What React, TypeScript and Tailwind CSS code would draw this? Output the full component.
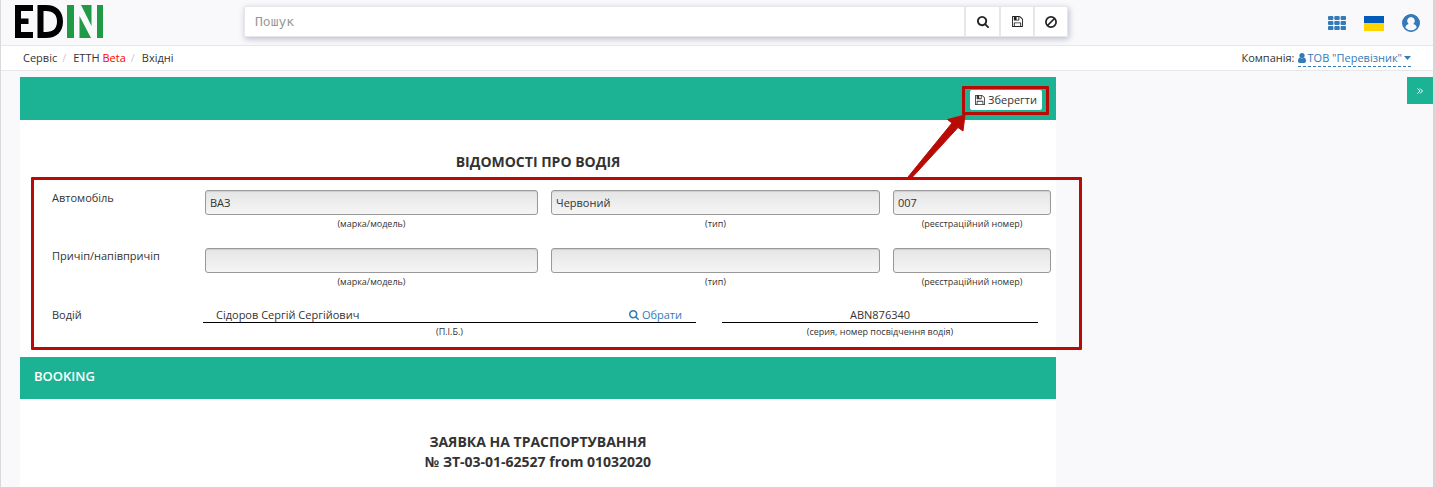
import type { ReactNode } from "react";

type IconProps = { className?: string };

const SaveIcon = ({ className }: IconProps) => (
  <svg className={className} viewBox="0 128 1536 1536" fill="currentColor" aria-hidden="true">
    <path d="M384 1536h768v-384h-768v384zM1280 1536h128v-896q0-14-10-38.5t-20-34.5l-281-281q-10-10-34-20t-39-10v416q0 40-28 68t-68 28h-576q-40 0-68-28t-28-68v-416h-128v1280h128v-416q0-40 28-68t68-28h832q40 0 68 28t28 68v416zM896 608v-320q0-13-9.5-22.5t-22.5-9.5h-192q-13 0-22.5 9.5t-9.5 22.5v320q0 13 9.5 22.5t22.5 9.5h192q13 0 22.5-9.5t9.5-22.5zM1536 640v928q0 40-28 68t-68 28h-1344q-40 0-68-28t-28-68v-1344q0-40 28-68t68-28h928q40 0 88 20t76 48l280 280q28 28 48 76t20 88z" />
  </svg>
);

const SearchIcon = ({ className }: IconProps) => (
  <svg className={className} viewBox="0 128 1664 1664" fill="currentColor" aria-hidden="true">
    <path d="M1152 832q0-185-131.5-316.5t-316.5-131.5-316.5 131.5-131.5 316.5 131.5 316.5 316.5 131.5 316.5-131.5 131.5-316.5zm512 832q0 52-38 90t-90 38q-54 0-90-38l-343-342q-179 124-399 124-143 0-273.5-55.5t-225-150-150-225-55.5-273.5 55.5-273.5 150-225 225-150 273.5-55.5 273.5 55.5 225 150 150 225 55.5 273.5q0 220-124 399l343 343q37 37 37 90z" />
  </svg>
);

const BanIcon = ({ className }: IconProps) => (
  <svg className={className} viewBox="0 0 12 12" fill="none" stroke="currentColor" strokeWidth="1.7" aria-hidden="true">
    <circle cx="6" cy="6" r="5.1" />
    <path d="M2.5 9.5l7-7" />
  </svg>
);

const UserIcon = ({ className }: IconProps) => (
  <svg className={className} viewBox="0 0 8 10" fill="currentColor" aria-hidden="true">
    <circle cx="4" cy="2.6" r="2.6" />
    <path d="M2 4.600C.6 4.800 0 6.400 0 8.100 0 9.200.7 10 1.700 10h4.600C7.300 10 8 9.200 8 8.100 8 6.400 7.400 4.800 6 4.600 4.800 5.800 3.200 5.800 2 4.600z" />
  </svg>
);

const GridIcon = ({ className }: IconProps) => (
  <svg className={className} viewBox="0 0 18 14" fill="currentColor" aria-hidden="true">
    {[0, 5, 10].map((y) =>
      [0, 6.3, 12.6].map((x) => <rect key={`${x}-${y}`} x={x} y={y} width="5.4" height="4.1" rx="1" />),
    )}
  </svg>
);

const AccountIcon = ({ className }: IconProps) => (
  <svg className={className} viewBox="0 0 18 18" aria-hidden="true">
    <circle cx="9" cy="9" r="8.3" fill="none" stroke="currentColor" strokeWidth="1.3" />
    <path
      fill="currentColor"
      fillRule="evenodd"
      d="M9 .5a8.500 8.500 0 1 0 0 17 8.500 8.500 0 0 0 0-17zM9 3a3.700 3.900 0 0 1 2.300 7c2 .3 3 1.600 3.400 3.700a7.400 7.400 0 0 1-11.400 0C3.700 11.600 4.700 10.300 6.700 10A3.700 3.900 0 0 1 9 3z"
    />
  </svg>
);

const Logo = () => (
  <svg className="h-[34px] w-[89px]" viewBox="0 0 89 34" role="img" aria-label="EDIN">
    <path d="M0 0h18v6H6v7.500h7.500v5.500H6V27h12v6H0z" fill="#000" />
    <path d="M22.500 0h8.500c10.500 0 17 6 17 16.500S41.500 33 31 33h-8.500zM28.500 6v21h2.500c7 0 11-3.500 11-10.500S38 6 31 6z" fill="#000" fillRule="evenodd" />
    <path d="M52 0h7v33h-7zM66 0h10.500v21zM64.500 11v22H76zM82 0h6v33h-6z" fill="#219a48" />
  </svg>
);

const Caption = ({ children }: { children: ReactNode }) => (
  <span className="mt-0.5 block text-center text-[9px] leading-[14px]">{children}</span>
);

const Field = ({ caption, value }: { caption: string; value: string }) => (
  <label className="block min-w-0">
    <input
      readOnly
      defaultValue={value}
      className="block h-[25px] w-full rounded-[3px] border border-[#999] bg-linear-to-b from-[#e5e5e5] to-[#f5f5f5] px-1 text-[11px] shadow-[inset_0_1px_1px_#0000001a] outline-none"
    />
    <Caption>{caption}</Caption>
  </label>
);

const VehicleRow = ({ title, values }: { title: string; values: string[] }) => (
  <div className="flex h-[58px] pl-8 pr-[5px]">
    <span className="w-[153px] shrink-0">{title}</span>
    <div className="grid flex-1 grid-cols-[333fr_329fr_158fr] gap-[13px]">
      <Field caption="(марка/модель)" value={values[0]} />
      <Field caption="(тип)" value={values[1]} />
      <Field caption="(реєстраційний номер)" value={values[2]} />
    </div>
  </div>
);

const headerButton = "flex items-center justify-center border-l-2 border-[#e7e7ea] bg-white text-[#222]";

export default function App() {
  return (
    <div className="min-h-screen overflow-x-clip border-l border-r-[3px] border-l-[#d9d9db] border-r-[#d6d6d8] bg-[#f9f9fb] font-['Open_Sans',sans-serif] text-[11px] leading-4 text-[#333]">
      <header className="flex h-[46px] items-start border-b border-[#e7e7ea] pr-[13px]">
        <a href="#home" className="ml-[14px] mt-[5px] block w-[229px] shrink-0">
          <Logo />
        </a>
        <form className="mt-1.5 flex h-[31px] max-w-[824px] flex-1 border border-[#e7e7ea] bg-white shadow-[1px_2px_6px_#b9bccd]">
          <input
            aria-label="Пошук"
            placeholder="Пошук"
            className="min-w-0 flex-1 px-[10px] font-['DejaVu_Sans_Mono',monospace] text-[13px] outline-none placeholder:text-[#999]"
          />
          <button type="button" aria-label="Знайти" className={`w-[35px] ${headerButton}`}>
            <SearchIcon className="size-3" />
          </button>
          <button type="button" aria-label="Зберегти пошук" className={`w-[34px] ${headerButton}`}>
            <SaveIcon className="size-[11px]" />
          </button>
          <button type="button" aria-label="Очистити" className={`w-[34px] ${headerButton}`}>
            <BanIcon className="size-3" />
          </button>
        </form>
        <nav className="ml-auto mt-[14px] flex items-center gap-[18px] text-[#337ab7]">
          <a href="#apps" aria-label="Сервіси">
            <GridIcon className="h-[14px] w-[18px]" />
          </a>
          <button type="button" aria-label="Мова" className="block h-[15px] w-5 bg-linear-to-b from-[#005bbb] from-50% to-[#ffd500] to-50%" />
          <a href="#account" aria-label="Профіль">
            <AccountIcon className="size-[18px]" />
          </a>
        </nav>
      </header>

      <div className="flex h-[25px] items-center justify-between border-b border-[#e7e7ea] bg-white pl-[22px] pr-[22px]">
        <nav className="flex">
          <a href="#service">Сервіс</a>
          <span className="pl-[5px] pr-[7px] text-[#ccc]">/</span>
          <a href="#ettn">
            ЕТТН <span className="text-[#f00]">Beta</span>
          </a>
          <span className="pl-[5px] pr-[7px] text-[#ccc]">/</span>
          <a href="#inbox">Вхідні</a>
        </nav>
        <div className="flex gap-[3px]">
          Компанія:
          <button type="button" className="flex items-center border-b border-dashed border-[#337ab7] text-[#337ab7]">
            <UserIcon className="mr-0.5 h-[10px] w-2" />
            ТОВ "Перевізник"
            <svg className="ml-0.5 h-1 w-[7px]" viewBox="0 0 7 4" fill="currentColor" aria-hidden="true">
              <path d="M0 0h7L3.500 4z" />
            </svg>
          </button>
        </div>
      </div>

      <div className="flex pt-1.5">
        <main className="ml-[19px] min-w-0 flex-1 bg-white">
          <div className="flex h-[43px] items-center justify-end bg-[#1bb394] pr-[14px]">
            <div className="relative mt-[3px]">
              <button type="button" className="flex h-5 items-center gap-[3px] rounded-[2px] bg-white px-[5px]">
                <SaveIcon className="size-[10px]" />
                Зберегти
              </button>
              <div className="pointer-events-none absolute -bottom-[5px] -left-2 -right-[7px] -top-1 rounded-[1px] border-[3px] border-[#b80b06]" />
              <svg className="pointer-events-none absolute right-[74px] top-[23px] h-16 w-[60px]" viewBox="0 0 60 64" fill="#b80b06" aria-hidden="true">
                <path d="M57 2L39.500 6.500l4.500 3.500L0 64h4.500L50 14.500l5 3.500z" stroke="#b80b06" strokeWidth="1" strokeLinejoin="round" />
              </svg>
            </div>
          </div>

          <h1 className="pb-[18px] pt-8 text-center text-[14px] font-bold leading-5">ВІДОМОСТІ ПРО ВОДІЯ</h1>
          <section className="relative h-[167px]">
            <VehicleRow title="Автомобіль" values={["ВАЗ", "Червоний", "007"]} />
            <VehicleRow title="Причіп/напівпричіп" values={["", "", ""]} />
            <div className="flex pl-8 pr-[18px] pt-px">
              <span className="w-[151px] shrink-0">Водій</span>
              <div className="grid flex-1 grid-cols-[493fr_316fr] gap-[26px]">
                <div>
                  <div className="flex h-4 justify-between border-b border-black pl-[13px] pr-[14px]">
                    <span>Сідоров Сергій Сергійович</span>
                    <button type="button" className="flex items-center gap-[3px] text-[#337ab7]">
                      <SearchIcon className="size-[10px]" />
                      Обрати
                    </button>
                  </div>
                  <Caption>(П.І.Б.)</Caption>
                </div>
                <div>
                  <div className="h-4 border-b border-black text-center">ABN876340</div>
                  <Caption>(серия, номер посвідчення водія)</Caption>
                </div>
              </div>
            </div>
            <div className="pointer-events-none absolute -right-[26px] -top-[13px] bottom-[7px] left-[11px] rounded-[1px] border-[3px] border-[#b80b06]" />
          </section>

          <h2 className="h-[42px] bg-[#1bb394] px-[14px] text-[13px] font-semibold leading-[38px] text-white">BOOKING</h2>
          <div className="pb-4 pt-[33px] text-center text-[14px] font-bold leading-5">
            <p>ЗАЯВКА НА ТРАСПОРТУВАННЯ</p>
            <p>№ ЗТ-03-01-62527 from 01032020</p>
          </div>
        </main>
        <aside className="flex w-[377px] shrink-0 items-start justify-end">
          <button type="button" aria-label="Розгорнути панель" className="flex h-[27px] w-[26px] items-center justify-center bg-[#1bb394] text-white">
            <svg className="size-1.5" viewBox="0 0 6 6" fill="none" stroke="currentColor" strokeWidth="1" aria-hidden="true">
              <path d="M.5.500l2.500 2.500-2.500 2.500M3 .5l2.500 2.500-2.500 2.500" />
            </svg>
          </button>
        </aside>
      </div>
    </div>
  );
}
